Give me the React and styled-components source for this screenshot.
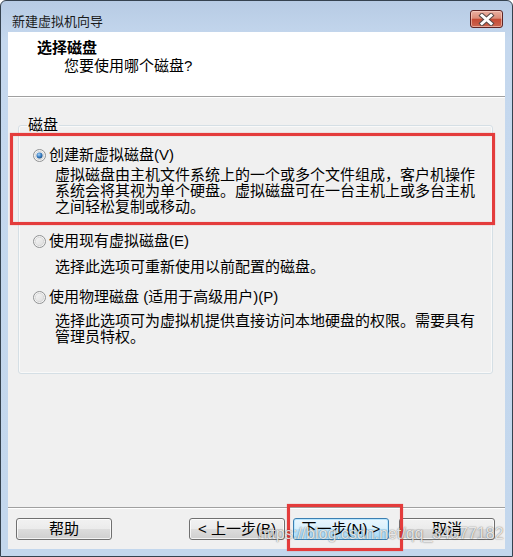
import React, { useId } from "react";
import styled, { createGlobalStyle } from "styled-components";

const GlobalStyle = createGlobalStyle`
  html, body { margin: 0; padding: 0; background: #ffffff; }
  body { font-family: "Liberation Sans", "Noto Sans CJK SC", sans-serif; color: #000; }
  * { box-sizing: border-box; }
`;

const Window = styled.div`
  position: relative;
  width: 513px;
  height: 557px;
  border: 1px solid #35424f;
  border-radius: 6px 6px 0 0;
  background: linear-gradient(#b7cbe4 0px, #c5d8ee 40px, #c3d7ed 100%);
  display: flex;
  flex-direction: column;
  overflow: hidden;
`;

const TitleBar = styled.div`
  height: 31px;
  flex: none;
  display: flex;
  align-items: flex-start;
  padding: 0 9px 0 11px;
`;

const Title = styled.div`
  flex: 1;
  margin-top: 12px;
  font-family: "Noto Sans CJK SC", sans-serif;
  font-size: 13px;
  line-height: 16px;
  color: #1b1b1b;
`;

const CloseButton = styled.div`
  margin-top: 9px;
  width: 33px;
  height: 18px;
  border: 1px solid #5e2525;
  border-radius: 3px;
  background: linear-gradient(#eab0a2 0%, #dc8c78 45%, #c54a34 52%, #cc6650 100%);
  box-shadow: inset 0 0 0 1px rgba(255, 220, 210, 0.55);
  display: flex;
  align-items: center;
  justify-content: center;
`;

const Client = styled.div`
  flex: 1;
  margin: 0 7px 7px 7px;
  background: #f0f0f0;
  display: flex;
  flex-direction: column;
`;

const Header = styled.div`
  height: 65px;
  flex: none;
  background: #ffffff;
  border-bottom: 1px solid #a0a0a0;
  padding: 7px 0 0 29px;
  font-family: "Liberation Sans", "Noto Sans CJK SC", sans-serif;
`;

const HeaderTitle = styled.div`
  font-size: 15px;
  line-height: 18px;
  font-weight: 700;
`;

const HeaderSub = styled.div`
  margin-left: 27px;
  font-size: 15px;
  line-height: 18px;
`;

const Body = styled.div`
  flex: 1;
  box-shadow: inset 0 1px 0 #ffffff;
  display: flex;
  flex-direction: column;
`;

const GroupBox = styled.fieldset`
  margin: 20px 12px 0 10px;
  height: 257px;
  border: 1px solid #d5dfe5;
  border-radius: 3px;
  box-shadow: inset 0 0 0 1px rgba(255, 255, 255, 0.6);
  padding: 14px 14px 0 14px;
  min-width: 0;
`;

const Legend = styled.legend`
  margin-left: -6px;
  padding: 0 1px;
  font-size: 15px;
  line-height: 16px;
`;

const Option = styled.div`
  margin-top: ${(p) => p.$top}px;
`;

const OptionLabel = styled.label`
  display: flex;
  align-items: center;
  gap: 3px;
  height: 16px;
  font-size: 15px;
  line-height: 16px;
  white-space: nowrap;
`;

const Desc = styled.div`
  margin-top: ${(p) => p.$top}px;
  margin-left: 22px;
  font-size: 15px;
  line-height: 16px;
  white-space: nowrap;
`;

const Footer = styled.div`
  flex: none;
  border-top: 1px solid #a0a0a0;
  box-shadow: inset 0 1px 0 #ffffff;
  padding: 10px 10px 9px 8px;
  display: flex;
  align-items: center;
`;

const Button = styled.div`
  width: 96px;
  height: 22px;
  margin-left: ${(p) => (p.$auto ? "auto" : `${p.$gap || 0}px`)};
  border: 1px solid ${(p) => (p.$default ? "#3c7fb1" : "#707070")};
  border-radius: 3px;
  background: ${(p) =>
    p.$default
      ? "linear-gradient(#eaf6fd 0%, #d9f0fc 50%, #bee6fd 50%, #a7d9f5 100%)"
      : "linear-gradient(#f2f2f2 0%, #ebebeb 50%, #dddddd 50%, #cfcfcf 100%)"};
  box-shadow: inset 0 0 0 1px ${(p) => (p.$default ? "rgba(180,230,255,0.9)" : "rgba(255,255,255,0.75)")};
  display: flex;
  align-items: center;
  justify-content: center;
  font-size: 15px;
  line-height: 16px;
  white-space: nowrap;
`;

const Highlight = styled.div`
  position: absolute;
  left: ${(p) => p.$x}px;
  top: ${(p) => p.$y}px;
  width: ${(p) => p.$w}px;
  height: ${(p) => p.$h}px;
  border: 3px solid #e43c3c;
  box-shadow: 0 0 1px rgba(228, 60, 60, 0.6), inset 0 0 1px rgba(228, 60, 60, 0.6);
  pointer-events: none;
`;

const Watermark = styled.div`
  position: absolute;
  left: 257px;
  top: 523px;
  font-family: "Liberation Sans", Arial, sans-serif;
  font-size: 16px;
  line-height: 20px;
  color: rgba(255, 255, 255, 0.82);
  text-shadow: 0 0 1px rgba(0, 0, 0, 0.45), 0 0 2px rgba(0, 0, 0, 0.25);
  white-space: nowrap;
  pointer-events: none;
`;

function Radio({ checked }) {
  const id = useId().replace(/:/g, "");
  return (
    <svg width="13" height="13" viewBox="0 0 13 13" style={{ flex: "none" }}>
      <defs>
        <linearGradient id={`o${id}`} x1="0" y1="0" x2="1" y2="1">
          <stop offset="0" stopColor="#f6f6f6" />
          <stop offset="1" stopColor="#dcdcdc" />
        </linearGradient>
        <radialGradient id={`d${id}`} cx="0.4" cy="0.35" r="0.7">
          <stop offset="0" stopColor="#a9d3f5" />
          <stop offset="0.55" stopColor="#3a7fc4" />
          <stop offset="1" stopColor="#1a4f86" />
        </radialGradient>
      </defs>
      <circle cx="6.5" cy="6.5" r="6" fill="#f4f4f4" stroke="#8f9192" strokeWidth="1" />
      <circle cx="6.5" cy="6.5" r="4.2" fill={`url(#o${id})`} stroke="#c9c9c9" strokeWidth="0.6" />
      {checked && <circle cx="6.5" cy="6.5" r="3" fill={`url(#d${id})`} />}
    </svg>
  );
}

function CloseX() {
  return (
    <svg width="17" height="13" viewBox="0 0 17 13">
      <path d="M4 2.5 L13 10.5 M13 2.5 L4 10.5" stroke="#5a4a48" strokeWidth="5" strokeLinecap="square" fill="none" />
      <path d="M4 2.5 L13 10.5 M13 2.5 L4 10.5" stroke="#ffffff" strokeWidth="3" strokeLinecap="square" fill="none" />
    </svg>
  );
}

export default function App() {
  return (
    <>
      <GlobalStyle />
      <Window>
        <TitleBar>
          <Title>新建虚拟机向导</Title>
          <CloseButton>
            <CloseX />
          </CloseButton>
        </TitleBar>
        <Client>
          <Header>
            <HeaderTitle>选择磁盘</HeaderTitle>
            <HeaderSub>您要使用哪个磁盘?</HeaderSub>
          </Header>
          <Body>
            <GroupBox>
              <Legend>磁盘</Legend>
              <Option $top={0}>
                <OptionLabel>
                  <Radio checked />
                  创建新虚拟磁盘(V)
                </OptionLabel>
                <Desc $top={4}>
                  虚拟磁盘由主机文件系统上的一个或多个文件组成，客户机操作
                  <br />
                  系统会将其视为单个硬盘。虚拟磁盘可在一台主机上或多台主机
                  <br />
                  之间轻松复制或移动。
                </Desc>
              </Option>
              <Option $top={18}>
                <OptionLabel>
                  <Radio />
                  使用现有虚拟磁盘(E)
                </OptionLabel>
                <Desc $top={10}>选择此选项可重新使用以前配置的磁盘。</Desc>
              </Option>
              <Option $top={14}>
                <OptionLabel>
                  <Radio />
                  使用物理磁盘 (适用于高级用户)(P)
                </OptionLabel>
                <Desc $top={8}>
                  选择此选项可为虚拟机提供直接访问本地硬盘的权限。需要具有
                  <br />
                  管理员特权。
                </Desc>
              </Option>
            </GroupBox>
          </Body>
          <Footer>
            <Button>帮助</Button>
            <Button $auto>&lt; 上一步(B)</Button>
            <Button $gap={8} $default>
              下一步(N) &gt;
            </Button>
            <Button $gap={10}>取消</Button>
          </Footer>
        </Client>
        <Highlight $x={9} $y={132} $w={485} $h={92} />
        <Highlight $x={286} $y={503} $w={116} $h={47} />
        <Watermark>https://blog.csdn.net/qq_34577182</Watermark>
      </Window>
    </>
  );
}
